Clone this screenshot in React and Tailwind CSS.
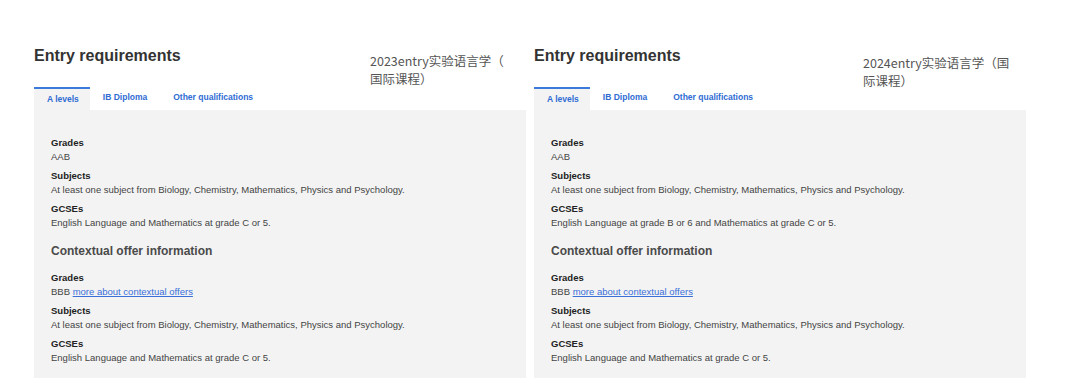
import React from "react";

const font = { fontFamily: '"Liberation Sans", Arial, sans-serif' };

function Item({ label, children }) {
  return (
    <div className="flex flex-col">
      <div className="text-[9.5px] leading-[14px] font-bold text-[#222]">{label}</div>
      <div className="text-[9.5px] leading-[14px] text-[#444]">{children}</div>
    </div>
  );
}

function Column({ line1, line2, gcse, annTop, annLeft }) {
  return (
    <div className="w-[492px] shrink-0 flex flex-col">
      <div className="flex items-start h-[40px]">
        <h2 className={`${annLeft} shrink-0 text-[16px] leading-[16px] font-bold text-[#333] mt-[0.5px]`}>
          Entry requirements
        </h2>
        <div
          className={`${annTop} text-[12.5px] leading-[18px] text-[#555]`}
          style={{ fontFamily: '"Noto Sans CJK SC", "Liberation Sans", sans-serif' }}
        >
          <div>{line1}</div>
          <div>{line2}</div>
        </div>
      </div>
      <div className="flex items-stretch h-[23px]">
        <div className="border-t-2 border-[#3b7ad8] bg-[#f3f3f3] pl-[13px] pr-[11px] pt-[4px] text-[8.5px] leading-[12px] font-bold text-[#2f6bd3]">
          A levels
        </div>
        <div className="px-[13px] pt-[4px] text-[8.5px] leading-[12px] font-bold text-[#2f6bd3]">
          IB Diploma
        </div>
        <div className="px-[13px] pt-[4px] text-[8.5px] leading-[12px] font-bold text-[#2f6bd3]">
          Other qualifications
        </div>
      </div>
      <div className="bg-[#f3f3f3] pl-[17px] pr-4 pt-[26px] pb-[13px] flex flex-col">
        <div className="flex flex-col gap-[5px]">
          <Item label="Grades">AAB</Item>
          <Item label="Subjects">
            At least one subject from Biology, Chemistry, Mathematics, Physics and Psychology.
          </Item>
          <Item label="GCSEs">{gcse}</Item>
        </div>
        <div className="mt-[13px] text-[12px] leading-[16px] font-bold text-[#4a4a4a]">
          Contextual offer information
        </div>
        <div className="mt-[12px] flex flex-col gap-[5px]">
          <Item label="Grades">
            BBB{" "}
            <a href="#" className="text-[#3a6fd8] underline">
              more about contextual offers
            </a>
          </Item>
          <Item label="Subjects">
            At least one subject from Biology, Chemistry, Mathematics, Physics and Psychology.
          </Item>
          <Item label="GCSEs">English Language and Mathematics at grade C or 5.</Item>
        </div>
      </div>
    </div>
  );
}

export default function App() {
  return (
    <div className="w-[1078px] h-[392px] bg-white overflow-hidden" style={font}>
      <div className="flex gap-[8px] pl-[34px] pt-[47px]">
        <Column
          line1="2023entry实验语言学（"
          line2="国际课程）"
          gcse="English Language and Mathematics at grade C or 5."
          annTop="mt-[5px]"
          annLeft="w-[336px]"
        />
        <Column
          line1="2024entry实验语言学（国"
          line2="际课程）"
          gcse="English Language at grade B or 6 and Mathematics at grade C or 5."
          annTop="mt-[7px]"
          annLeft="w-[329px]"
        />
      </div>
    </div>
  );
}
